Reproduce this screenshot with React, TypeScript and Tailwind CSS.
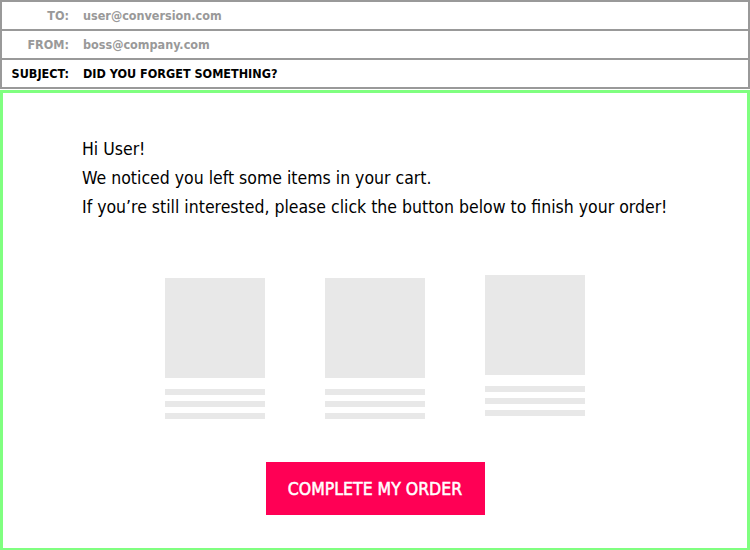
import React from 'react';

const font = { fontFamily: '"DejaVu Sans Condensed", "DejaVu Sans", sans-serif' };

function HeaderRow({ label, value, strong }: { label: string; value: string; strong?: boolean }) {
  const tone = strong ? 'text-black' : 'text-[#999999]';
  return (
    <div className="flex h-[29px] items-center border-b-2 border-[#999999] pt-px font-bold text-[12.5px]">
      <span className={`w-[67px] text-right ${tone}`}>{label}</span>
      <span className={`ml-[14px] ${tone}`}>{value}</span>
    </div>
  );
}

function ItemCard({ lifted }: { lifted?: boolean }) {
  return (
    <div className={`flex w-[100px] flex-col ${lifted ? '-mt-[3px]' : ''}`}>
      <div className="h-[100px] w-[100px] bg-[#e8e8e8]" />
      <div className="mt-[11px] flex flex-col gap-[6px]">
        <div className="h-[6px] bg-[#e8e8e8]" />
        <div className="h-[6px] bg-[#e8e8e8]" />
        <div className="h-[6px] bg-[#e8e8e8]" />
      </div>
    </div>
  );
}

export default function App() {
  return (
    <div className="h-[550px] w-[750px] bg-white" style={font}>
      {/* email header */}
      <div className="border-x-2 border-t-2 border-[#999999]">
        <HeaderRow label="TO:" value="user@conversion.com" />
        <HeaderRow label="FROM:" value="boss@company.com" />
        <HeaderRow label="SUBJECT:" value="DID YOU FORGET SOMETHING?" strong />
      </div>

      {/* email body */}
      <div className="mt-px flex h-[461px] flex-col border-[3px] border-[#80ff80]">
        <div className="pl-[79px] pt-[42px] text-[17.5px] leading-[29px] text-black">
          <p>Hi User!</p>
          <p>We noticed you left some items in your cart.</p>
          <p>If you’re still interested, please click the button below to finish your order!</p>
        </div>

        <div className="mt-[56px] flex justify-center gap-[60px]">
          <ItemCard />
          <ItemCard />
          <ItemCard lifted />
        </div>

        <div className="mt-[43px] flex justify-center">
          <button className="h-[53px] w-[219px] whitespace-nowrap bg-[#ff0055] pt-px text-[17.5px] text-white [-webkit-text-stroke:0.5px_white]">
            COMPLETE MY ORDER
          </button>
        </div>
      </div>
    </div>
  );
}
